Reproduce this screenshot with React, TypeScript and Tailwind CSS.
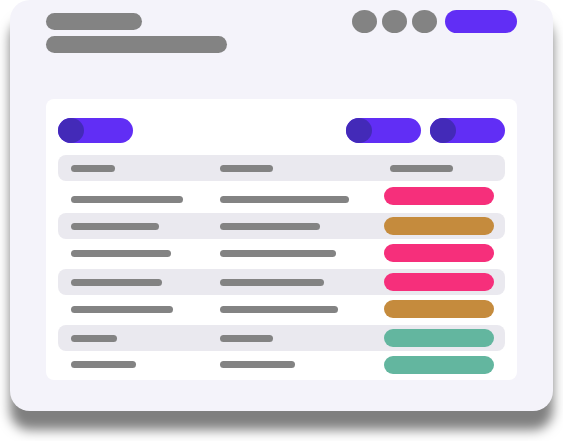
import React from "react";
import { clsx } from "clsx";

type Row = { height: string; name: string; detail: string; status: string };

const PINK = "bg-[#f62f7b]";
const GOLD = "bg-[#c58b3d]";
const GREEN = "bg-[#63b69f]";

const rows: Row[] = [
  { height: "h-8", name: "w-[112px]", detail: "w-[129px]", status: PINK },
  { height: "h-[26px]", name: "w-[88px]", detail: "w-[100px]", status: GOLD },
  { height: "h-[30px]", name: "w-[100px]", detail: "w-[116px]", status: PINK },
  { height: "h-[26px]", name: "w-[91px]", detail: "w-[104px]", status: PINK },
  { height: "h-[30px]", name: "w-[102px]", detail: "w-[118px]", status: GOLD },
  { height: "h-[26px]", name: "w-[46px]", detail: "w-[53px]", status: GREEN },
  { height: "h-[29px]", name: "w-[65px]", detail: "w-[75px]", status: GREEN },
];

function Line({ width }: { width: string }) {
  return <div className={clsx("h-[7px] rounded-full bg-[#838383]", width)} />;
}

function Pill({ label }: { label: string }) {
  return (
    <button type="button" aria-label={label} className="flex h-[25px] w-[75px] rounded-full bg-[#612ef5]">
      <span className="h-full w-[26px] rounded-[50%] bg-[#432ab8]" />
    </button>
  );
}

export default function App() {
  return (
    <div className="bg-white pb-[30px]">
      <main className="mx-2.5 rounded-[20px] bg-[#f4f3fa] px-9 pt-2.5 pb-[31px] shadow-[0_19px_12px_#7f7f7f]">
        <header className="flex h-[89px] items-start justify-between">
          <div className="flex flex-col gap-1.5 pt-[3px]">
            <div className="h-[17px] w-24 rounded-full bg-[#838383]" />
            <div className="h-[17px] w-[181px] rounded-full bg-[#838383]" />
          </div>
          <div className="flex gap-2">
            <div className="flex gap-[5px]">
              {["Search", "Notifications", "Profile"].map((label) => (
                <button
                  key={label}
                  type="button"
                  aria-label={label}
                  className="h-[23px] w-[25px] rounded-[50%] bg-[#838383]"
                />
              ))}
            </div>
            <button type="button" aria-label="Create" className="h-[23px] w-[72px] rounded-full bg-[#612ef5]" />
          </div>
        </header>

        <section className="rounded-lg bg-white px-3 pt-[19px]">
          <div className="mb-3 flex justify-between">
            <Pill label="Add" />
            <div className="flex gap-[9px]">
              <Pill label="Filter" />
              <Pill label="Sort" />
            </div>
          </div>

          <table className="w-full table-fixed border-separate border-spacing-0">
            <thead>
              <tr className="h-[26px]">
                <th aria-label="Name" className="w-[162px] rounded-l-lg bg-[#eae9ef] p-0 pl-[13px] align-middle">
                  <Line width="w-[44px]" />
                </th>
                <th aria-label="Details" className="w-[164px] bg-[#eae9ef] p-0 align-middle">
                  <Line width="w-[53px]" />
                </th>
                <th aria-label="Status" className="rounded-r-lg bg-[#eae9ef] p-0 pl-1.5 align-middle">
                  <Line width="w-[63px]" />
                </th>
              </tr>
            </thead>
            <tbody>
              {rows.map((row, i) => {
                const shade = i % 2 === 1 ? "bg-[#eae9ef]" : "pb-0.5";
                const lead = i === 0 && "pt-1.5";
                return (
                  <tr key={i} className={row.height}>
                    <td className={clsx("rounded-l-lg pl-[13px] align-middle", shade, lead)}>
                      <Line width={row.name} />
                    </td>
                    <td className={clsx("align-middle", shade, lead)}>
                      <Line width={row.detail} />
                    </td>
                    <td className={clsx("rounded-r-lg pr-[11px] align-middle", shade)}>
                      <div className={clsx("h-[18px] rounded-full", row.status)} />
                    </td>
                  </tr>
                );
              })}
            </tbody>
          </table>
        </section>
      </main>
    </div>
  );
}
